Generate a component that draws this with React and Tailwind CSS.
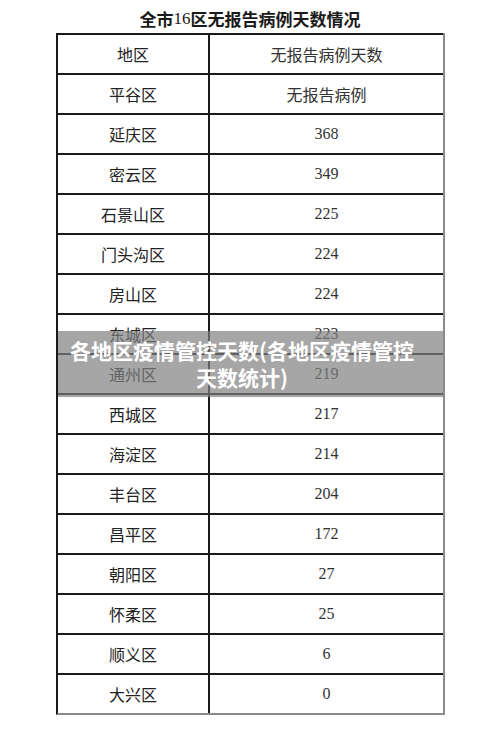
import React from "react";

const rows = [
  ["平谷区", "无报告病例"],
  ["延庆区", "368"],
  ["密云区", "349"],
  ["石景山区", "225"],
  ["门头沟区", "224"],
  ["房山区", "224"],
  ["东城区", "223"],
  ["通州区", "219"],
  ["西城区", "217"],
  ["海淀区", "214"],
  ["丰台区", "204"],
  ["昌平区", "172"],
  ["朝阳区", "27"],
  ["怀柔区", "25"],
  ["顺义区", "6"],
  ["大兴区", "0"],
];

const cjk = { fontFamily: '"Noto Sans CJK SC", "Noto Sans", sans-serif' };
const serif = { fontFamily: '"Liberation Serif", "Noto Sans CJK SC", serif' };

function Cell({ children, left, num }) {
  return (
    <div
      className={
        "flex items-center justify-center text-[16px] " +
        (left ? "w-[152px] border-r-2 border-[#1a1a1a] text-[#222]" : "flex-1 text-[#333]")
      }
      style={num ? serif : cjk}
    >
      {children}
    </div>
  );
}

export default function App() {
  return (
    <div className="w-[500px] h-[729px] bg-white relative overflow-hidden">
      <div
        className="h-[33px] flex items-center justify-center text-[17px] font-bold text-[#1a1a1a] pt-[4px]"
        style={cjk}
      >
        全市<span className="font-normal" style={serif}>16</span>区无报告病例天数情况
      </div>
      <div className="ml-[56px] w-[389px] border-l-2 border-[#1a1a1a] border-r-2 border-r-[#8a8a8a] border-b-2 border-b-[#8a8a8a] relative">
        <div className="h-[40px] flex border-t-2 border-[#1a1a1a]">
          <Cell left>地区</Cell>
          <Cell>无报告病例天数</Cell>
        </div>
        {rows.map(([a, b], i) => (
          <div key={i} className="h-[40px] flex border-t-2 border-[#1a1a1a]">
            <Cell left>{a}</Cell>
            <Cell num={i > 0}>{b}</Cell>
          </div>
        ))}
        <div
          className="absolute left-0 top-[298px] w-[385px] h-[66px] bg-[#808080]/70 flex flex-col items-center justify-center text-white font-bold text-[21px] leading-[27px] pr-[17px]"
          style={cjk}
        >
          <div>各地区疫情管控天数(各地区疫情管控</div>
          <div>天数统计)</div>
        </div>
      </div>
    </div>
  );
}
